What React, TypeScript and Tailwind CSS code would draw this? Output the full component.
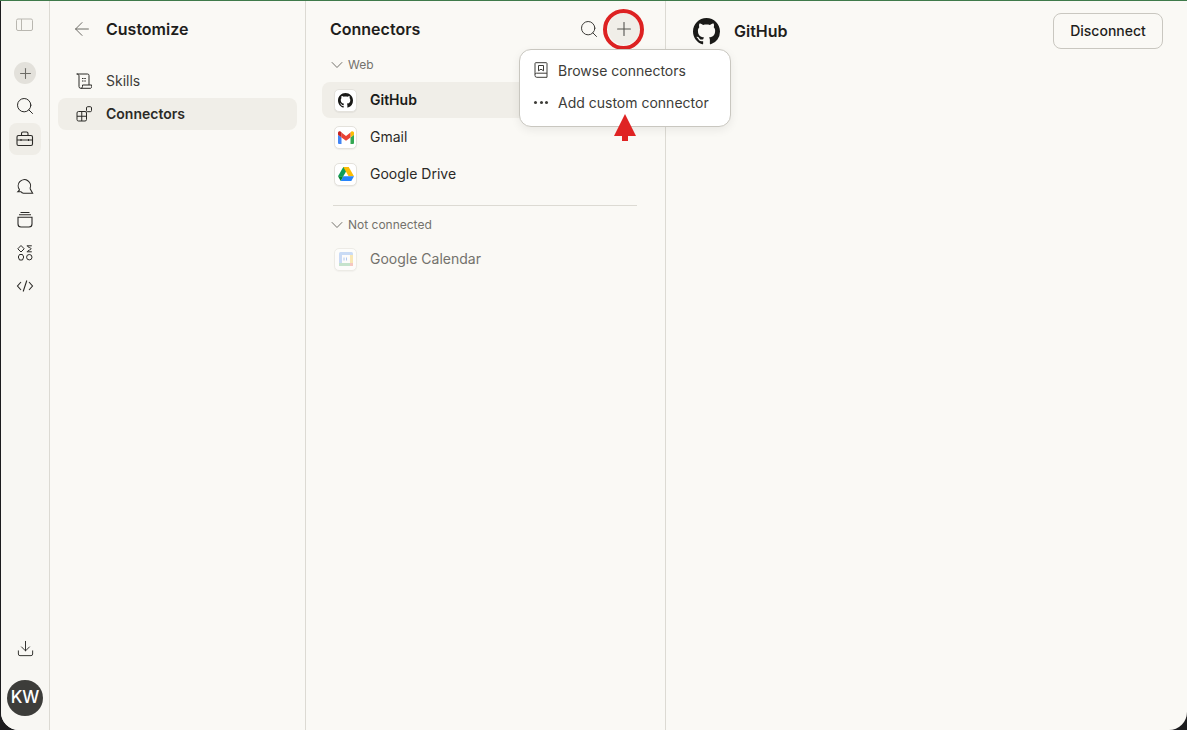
import { ArrowLeft, Download, Plus, Search } from 'lucide-react';

const font = { fontFamily: 'Inter, "Liberation Sans", sans-serif' };

function PanelIcon() {
  return (
    <svg width="18" height="14" viewBox="0 0 18 14" fill="none" stroke="#b9b7b0" strokeWidth="1">
      <rect x="0.5" y="1" width="16" height="11.5" rx="1.5" />
      <path d="M5.5 1v11.5" />
    </svg>
  );
}

function ToolboxIcon() {
  return (
    <svg width="18" height="18" viewBox="0 0 18 18" fill="none" stroke="#2b2a27" strokeWidth="1.1">
      <rect x="1" y="5.5" width="15.5" height="10" rx="1.5" />
      <path d="M5.5 5.5V3.5a1.5 1.5 0 0 1 1.5-1.5h3.5a1.5 1.5 0 0 1 1.5 1.5v2M1 10h15.5M5 9v2M12.5 9v2" />
    </svg>
  );
}

function ChatsIcon() {
  return (
    <svg width="18" height="18" viewBox="0 0 18 18" fill="none" stroke="#2b2a27" strokeWidth="1.1">
      <path d="M3.6 11.8A6.2 6.2 0 1 1 14 10.5" />
      <path d="M3.6 11.800 1.800 13.800H5.200M14 10.500 16.600 15.200H7.500C6.300 15.200 5.500 14.600 5.200 13.800" />
    </svg>
  );
}

function ProjectsIcon() {
  return (
    <svg width="18" height="18" viewBox="0 0 18 18" fill="none" stroke="#2b2a27" strokeWidth="1.1">
      <path d="M4.5 1.500h9M3 3.800h12" />
      <path d="M2 6.200h14v6.800a3 3 0 0 1-3 3H5a3 3 0 0 1-3-3z" />
    </svg>
  );
}

function ArtifactsIcon() {
  return (
    <svg width="18" height="18" viewBox="0 0 18 18" fill="none" stroke="#2b2a27" strokeWidth="1">
      <path d="M5 1.500 8.200 4.800 5 8 1.800 4.800z" />
      <path d="M10.800 1.800h5M11.500 1.800c0 2 3.600 1.500 3.600 3s-3.600 1-3.600 3M10.800 7.800h5" />
      <path d="M3.500 10.500h3l1.200 2.500-1.200 3h-3l-1.200-3z" />
      <circle cx="13.300" cy="13.200" r="2.700" />
    </svg>
  );
}

function CodeIcon() {
  return (
    <svg width="18" height="18" viewBox="0 0 18 18" fill="none" stroke="#2b2a27" strokeWidth="1.1">
      <path d="M5 5 1.500 9 5 13M13 5l3.500 4-3.500 4M10.800 3.500 7.200 14.500" />
    </svg>
  );
}

function SkillsIcon() {
  return (
    <svg width="16" height="16" viewBox="0 0 16 16" fill="none" stroke="#2b2a27" strokeWidth="1">
      <path d="M.7 1h10.800a1.500 1.500 0 0 1 1.500 1.500V12" />
      <path d="M.7 1c1.400 0 2.300.8 2.300 2v10.500a1.800 1.800 0 0 0 1.800 1.800h9.700c.8 0 1.200-.8 1.200-1.800V12H6.500v1.500c0 1-.6 1.800-1.700 1.800" />
      <path d="M6 5.500h4.500M6 8h4.500" strokeDasharray="1.500 .8" />
    </svg>
  );
}

function ConnectorsIcon() {
  return (
    <svg width="16" height="16" viewBox="0 0 16 16" fill="none" stroke="#2b2a27" strokeWidth="1">
      <rect x="10.500" y="0.700" width="5" height="5" rx="1.200" />
      <rect x="1" y="5.500" width="9.500" height="9.500" rx="1.500" />
      <path d="M5.750 5.500V15M1 10.250h9.500" />
    </svg>
  );
}

function BookIcon() {
  return (
    <svg width="14" height="16" viewBox="0 0 14 16" fill="none" stroke="#3d3c38" strokeWidth="1">
      <path d="M1 12.500V1.500A.8.8 0 0 1 1.800.7h10.400a.8.8 0 0 1 .8.8v13.800H2.800A1.800 1.800 0 0 1 1 13.500v-1a1.500 1.500 0 0 1 1.500-1.300H13" />
      <path d="M4.500 3.500h5v5.300L7 7.200 4.500 8.800z" />
    </svg>
  );
}

function GitHubMark({ size }: { size: number }) {
  return (
    <svg width={size} height={size} viewBox="0 0 16 16" fill="#1a1a18">
      <path d="M8 0C3.580 0 0 3.580 0 8c0 3.540 2.290 6.530 5.470 7.590.4.070.55-.17.55-.38 0-.19-.01-.82-.01-1.490-2.010.37-2.530-.49-2.690-.94-.09-.23-.48-.94-.82-1.130-.28-.15-.68-.52-.01-.53.63-.01 1.080.58 1.230.82.720 1.210 1.870.87 2.330.66.070-.52.280-.87.510-1.070-1.780-.2-3.640-.89-3.640-3.950 0-.87.310-1.590.820-2.150-.080-.2-.360-1.020.080-2.120 0 0 .670-.210 2.200.820.640-.180 1.320-.270 2-.270s1.360.090 2 .270c1.530-1.040 2.200-.820 2.200-.820.440 1.100.160 1.920.080 2.120.510.560.820 1.270.820 2.150 0 3.070-1.870 3.750-3.650 3.950.290.250.540.730.540 1.480 0 1.070-.010 1.930-.010 2.200 0 .210.150.460.550.380A8.010 8.010 0 0 0 16 8c0-4.420-3.580-8-8-8z" />
    </svg>
  );
}

function GmailMark() {
  return (
    <svg width="16" height="13" viewBox="0 0 16 13">
      <path d="M1 13h2.500V6.500L0 3.800V12a1 1 0 0 0 1 1z" fill="#4285f4" />
      <path d="M12.500 13H15a1 1 0 0 0 1-1V3.800l-3.500 2.700z" fill="#34a853" />
      <path d="M12.500 1.500v5L16 3.800V2c0-1.500-1.700-2.300-2.800-1.300z" fill="#fbbc04" />
      <path d="M3.500 6.500v-5L8 5l4.500-3.500v5L8 9.800z" fill="#ea4335" />
      <path d="M0 2v1.800l3.500 2.700v-5L2.800.7C1.700-.2 0 .5 0 2z" fill="#c5221f" />
    </svg>
  );
}

function DriveMark() {
  return (
    <svg width="16" height="14" viewBox="0 0 16 14">
      <path d="M5.300 0h5.400l-5.400 9.300H0z" fill="#0f9d58" />
      <path d="M5.300 0h5.400L16 9.300h-5.400z" fill="#fbbc04" />
      <path d="M2.700 14 5.300 9.300H16L13.300 14z" fill="#2684fc" />
      <path d="M0 9.300h5.300L2.700 14z" fill="#00832d" />
    </svg>
  );
}

function CalendarMark() {
  return (
    <svg width="14" height="14" viewBox="0 0 14 14">
      <rect x="0" y="0" width="14" height="14" rx="1.500" fill="#a9c6f5" />
      <rect x="3" y="3" width="8" height="8" fill="#fff" />
      <rect x="0" y="11" width="11" height="3" fill="#a5d6b4" />
      <rect x="11" y="3" width="3" height="8" fill="#f8dc8c" />
      <rect x="11" y="11" width="3" height="3" fill="#f3a79f" />
      <path d="M5 5.500v3M7.500 5.500v3" stroke="#7ea6ea" strokeWidth="1" />
    </svg>
  );
}

function RailButton({ children, active }: { children: React.ReactNode; active?: boolean }) {
  return (
    <div className={`flex h-8 w-8 items-center justify-center rounded-lg ${active ? 'bg-[#efede7]' : ''}`}>
      {children}
    </div>
  );
}

function ConnectorRow({
  name,
  icon,
  active,
  muted,
}: {
  name: string;
  icon: React.ReactNode;
  active?: boolean;
  muted?: boolean;
}) {
  return (
    <div className={`flex h-9 items-center gap-[13px] rounded-lg pl-3 ${active ? 'bg-[#f0eee8]' : ''}`}>
      <div className={`flex h-[23px] w-[23px] shrink-0 items-center justify-center rounded-[5px] border border-[#e4e2dc] bg-white shadow-[0_1px_1px_rgba(0,0,0,0.05)] ${muted ? 'opacity-60' : ''}`}>
        {icon}
      </div>
      <span className={`pb-[2px] text-[14px] ${active ? 'font-semibold text-[#1a1a18]' : muted ? 'text-[#73726c]' : 'text-[#2b2a27]'}`}>
        {name}
      </span>
    </div>
  );
}

function SectionLabel({ label }: { label: string }) {
  return (
    <div className="flex h-[18px] items-center gap-[5px] pl-[9px] text-[12px] text-[#73726c]">
      <svg width="12" height="8" viewBox="0 0 12 8" fill="none" stroke="#73726c" strokeWidth="1">
        <path d="M.8 1.200 6 6.500l5.200-5.300" />
      </svg>
      <span>{label}</span>
    </div>
  );
}

export default function App() {
  return (
    <div className="h-[730px] w-[1187px] overflow-hidden bg-[#1c1c1e]" style={font}>
      <div className="h-px bg-[#3e7a4a]" />
      <div className="ml-px flex h-[729px] overflow-hidden rounded-b-[18px] bg-[#faf9f5]">
        {/* icon rail */}
        <aside className="flex w-[49px] shrink-0 flex-col items-center border-r border-[#dcdad3] bg-[#f8f7f3] pt-[17px] pb-[14px]">
          <PanelIcon />
          <div className="mt-[30px] flex h-[22px] w-[22px] items-center justify-center rounded-full bg-[#e3e1db]">
            <Plus size={17} strokeWidth={1.5} className="text-[#6d6c66]" />
          </div>
          <div className="mt-[6px] flex flex-col items-center gap-px">
            <RailButton>
              <Search size={20} strokeWidth={1.2} className="text-[#2b2a27]" />
            </RailButton>
            <RailButton active>
              <ToolboxIcon />
            </RailButton>
          </div>
          <div className="mt-[16px] flex flex-col items-center gap-px">
            <RailButton>
              <ChatsIcon />
            </RailButton>
            <RailButton>
              <ProjectsIcon />
            </RailButton>
            <RailButton>
              <ArtifactsIcon />
            </RailButton>
            <RailButton>
              <CodeIcon />
            </RailButton>
          </div>
          <div className="mt-auto">
            <Download size={19} strokeWidth={1.2} className="text-[#2b2a27]" />
          </div>
          <div className="mt-[22px] flex h-9 w-9 items-center justify-center rounded-full bg-[#3d3d3a] text-[17px] font-medium text-white">
            KW
          </div>
        </aside>

        {/* customize column */}
        <aside className="w-[256px] shrink-0 border-r border-[#dcdad3] px-2 pt-[17px]">
          <div className="flex h-[22px] items-center pl-[13px]">
            <ArrowLeft size={22} strokeWidth={1} className="text-[#5f5e59]" />
            <span className="ml-[13px] text-[16px] font-semibold text-[#1f1e1c]">Customize</span>
          </div>
          <div className="mt-[25px] flex h-8 items-center gap-[14px] pl-[18px] text-[14px] text-[#3d3c38]">
            <SkillsIcon />
            <span className="pb-[2px]">Skills</span>
          </div>
          <div className="mt-px flex h-8 items-center gap-[14px] rounded-lg bg-[#f0eee8] pl-[18px] text-[14px] font-semibold text-[#2b2a27]">
            <ConnectorsIcon />
            <span className="pb-[2px]">Connectors</span>
          </div>
        </aside>

        {/* connectors column */}
        <section className="relative w-[360px] shrink-0 border-r border-[#dcdad3] px-4 pt-[17px]">
          <div className="flex h-[22px] items-center justify-between pl-2">
            <span className="text-[16px] font-semibold text-[#1f1e1c]">Connectors</span>
            <div className="mr-[9px] flex items-center gap-[9px]">
              <Search size={20} strokeWidth={1.2} className="text-[#3d3c38]" />
              <div className="flex h-8 w-8 items-center justify-center rounded-full bg-[#f0eee8]">
                <Plus size={22} strokeWidth={1.2} className="text-[#55544f]" />
              </div>
            </div>
          </div>
          <div className="mt-[16px]">
            <SectionLabel label="Web" />
          </div>
          <div className="mt-[8px] flex flex-col gap-px">
            <ConnectorRow name="GitHub" active icon={<GitHubMark size={15} />} />
            <ConnectorRow name="Gmail" icon={<GmailMark />} />
            <ConnectorRow name="Google Drive" icon={<DriveMark />} />
          </div>
          <div className="mt-[13px] ml-[11px] mr-[12px] h-px bg-[#dcdad3]" />
          <div className="mt-[10px]">
            <SectionLabel label="Not connected" />
          </div>
          <div className="mt-[7px]">
            <ConnectorRow name="Google Calendar" muted icon={<CalendarMark />} />
          </div>

          {/* annotated add button */}
          <div className="absolute top-[8px] left-[297px] h-[41px] w-[41px] rounded-full border-4 border-[#dd2222]" />

          {/* add menu */}
          <div className="absolute top-[48px] left-[213px] h-[78px] w-[212px] rounded-xl border border-[#c9c7c0] bg-white px-[14px] pt-[4px] text-[14px] text-[#3d3c38] shadow-[0_3px_10px_rgba(0,0,0,0.07)]">
            <div className="flex h-8 items-center gap-[10px]">
              <div className="flex w-[14px] justify-center">
                <BookIcon />
              </div>
              <span>Browse connectors</span>
            </div>
            <div className="flex h-8 items-center gap-[10px]">
              <div className="flex w-[14px] justify-between">
                <span className="h-[3px] w-[3px] rounded-full bg-[#3d3c38]" />
                <span className="h-[3px] w-[3px] rounded-full bg-[#3d3c38]" />
                <span className="h-[3px] w-[3px] rounded-full bg-[#3d3c38]" />
              </div>
              <span>Add custom connector</span>
            </div>
          </div>

          {/* annotation arrow */}
          <svg className="absolute top-[112px] left-[307px]" width="24" height="28" viewBox="0 0 24 28" fill="#df2323">
            <path d="M12 1 23 23h-8v5H9v-5H1z" />
          </svg>
        </section>

        {/* detail column */}
        <section className="flex h-[62px] flex-1 items-start justify-between pt-[12px] pr-[24px] pl-[27px]">
          <div className="flex h-9 items-center gap-[14px]">
            <GitHubMark size={27} />
            <span className="text-[16px] font-semibold text-[#1f1e1c]">GitHub</span>
          </div>
          <button className="h-9 w-[110px] rounded-lg border border-[#c9c7c0] pb-[2px] text-[14px] font-medium text-[#1f1e1c]">
            Disconnect
          </button>
        </section>
      </div>
    </div>
  );
}
